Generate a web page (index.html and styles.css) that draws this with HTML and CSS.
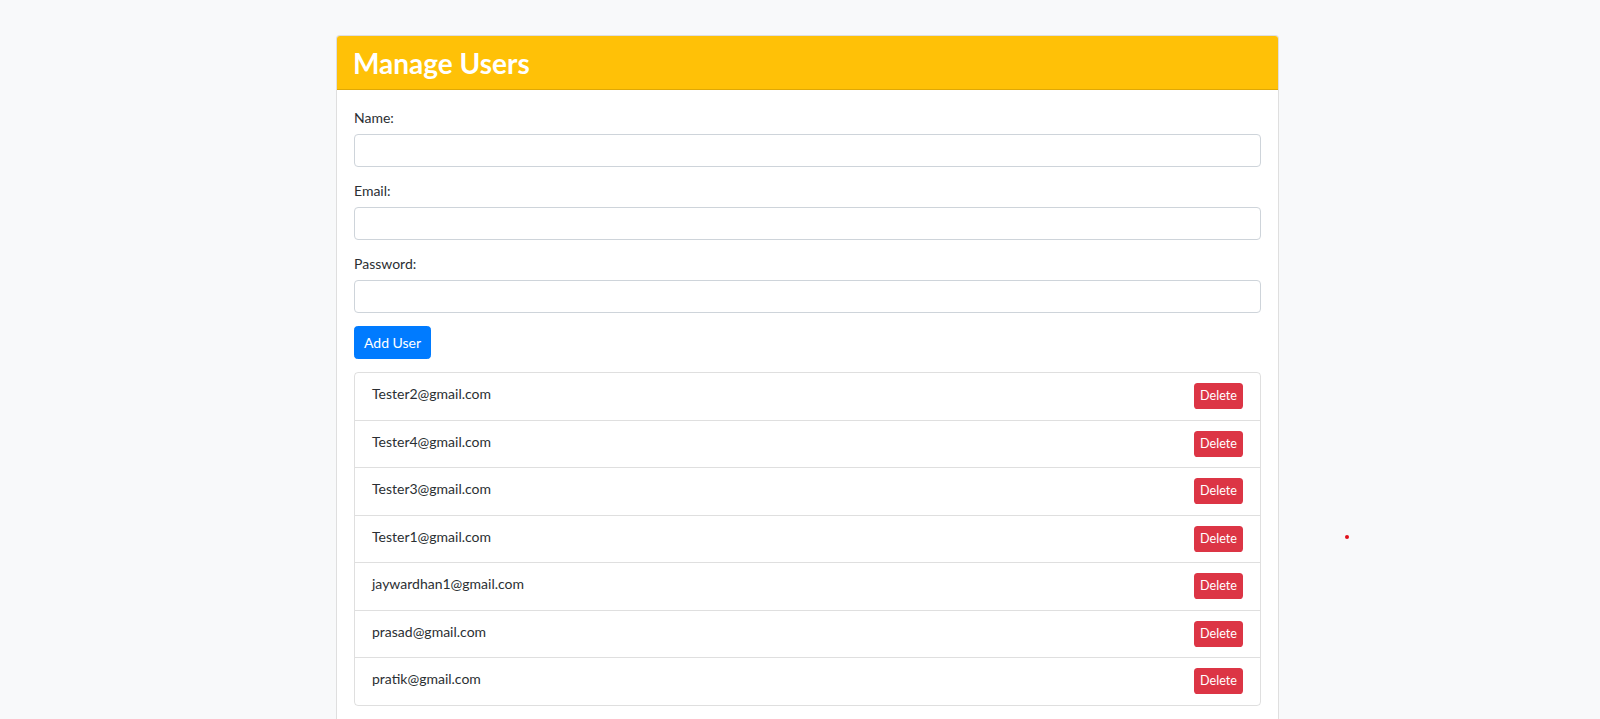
FILE: index.html
```html
<!DOCTYPE html>
<html lang="en">
<head>
<meta charset="utf-8">
<title>Manage Users</title>
<link rel="stylesheet" href="styles.css">
</head>
<body>
<div class="page">
  <div class="card">
    <div class="card-header"><h2 class="title">Manage Users</h2></div>
    <div class="card-body">
      <div class="form-group">
        <label class="label">Name:</label>
        <input class="input" type="text">
      </div>
      <div class="form-group">
        <label class="label">Email:</label>
        <input class="input" type="email">
      </div>
      <div class="form-group">
        <label class="label">Password:</label>
        <input class="input" type="password">
      </div>
      <button class="btn-primary">Add User</button>
      <ul class="list">
        <li class="list-item"><span class="email">Tester2@gmail.com</span><button class="btn-delete">Delete</button></li>
        <li class="list-item"><span class="email">Tester4@gmail.com</span><button class="btn-delete">Delete</button></li>
        <li class="list-item"><span class="email">Tester3@gmail.com</span><button class="btn-delete">Delete</button></li>
        <li class="list-item"><span class="email">Tester1@gmail.com</span><button class="btn-delete">Delete</button></li>
        <li class="list-item"><span class="email">jaywardhan1@gmail.com</span><button class="btn-delete">Delete</button></li>
        <li class="list-item"><span class="email">prasad@gmail.com</span><button class="btn-delete">Delete</button></li>
        <li class="list-item"><span class="email">pratik@gmail.com</span><button class="btn-delete">Delete</button></li>
      </ul>
    </div>
  </div>
</div>
<span class="dot"></span>
</body>
</html>
```
FILE: styles.css
```css
* { box-sizing: border-box; }
html, body { margin: 0; padding: 0; }
body {
  background: #f8f9fa;
  color: #2b2f33;
  font-family: Lato, "Open Sans", sans-serif;
  font-size: 14px;
  line-height: 1.5;
}
.page {
  padding: 35px 0 0 336px;
}
.card {
  width: 943px;
  background: #fff;
  border: 1px solid rgba(0,0,0,.125);
  border-radius: 4px;
}
.card-header {
  background: #ffc107;
  border-bottom: 1px solid rgba(0,0,0,.125);
  border-radius: 3px 3px 0 0;
  padding: 10px 16px 9px 16px;
  height: 54px;
}
.title {
  margin: 0;
  color: #fff;
  font-size: 28px;
  font-weight: 700;
  line-height: 34px;
}
.card-body {
  padding: 17px 17px 18px 17px;
}
.form-group { margin-bottom: 13px; }
.label {
  display: block;
  line-height: 21px;
  margin-bottom: 6px;
}
.input {
  display: block;
  width: 100%;
  height: 33px;
  border: 1px solid #ced4da;
  border-radius: 4px;
  background: #fff;
  font: inherit;
  padding: 5px 11px;
}
.btn-primary {
  display: block;
  height: 33px;
  padding: 0 9px;
  border: 1px solid #007bff;
  background: #007bff;
  color: #fff;
  border-radius: 3.6px;
  font: inherit;
  font-size: 14px;
  line-height: 31px;
}
.list {
  list-style: none;
  margin: 13px 0 0 0;
  padding: 0;
  border: 1px solid rgba(0,0,0,.125);
  border-radius: 4px;
}
.list-item {
  display: flex;
  justify-content: space-between;
  align-items: flex-start;
  padding: 10.25px 17px 10.25px 17px;
  border-top: 1px solid rgba(0,0,0,.125);
}
.list-item:first-child { border-top: 0; }
.email { line-height: 21.6px; }
.btn-delete {
  height: 26px;
  width: 49px;
  padding: 0;
  border: 0;
  border-radius: 3.6px;
  background: #dc3545;
  color: #fff;
  font: inherit;
  font-size: 12.6px;
  line-height: 26px;
}
.dot {
  position: absolute;
  left: 1345px;
  top: 535px;
  width: 4px;
  height: 4px;
  border-radius: 50%;
  background: #e0101a;
}
```
